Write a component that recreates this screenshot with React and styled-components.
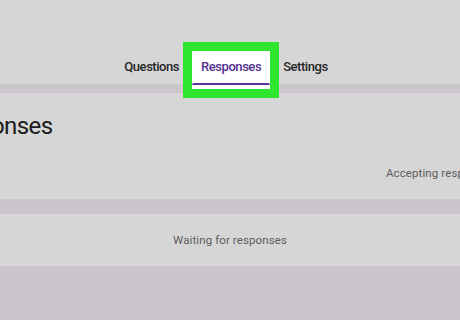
import React from "react";
import styled, { createGlobalStyle } from "styled-components";

const Global = createGlobalStyle`
  html, body { margin: 0; padding: 0; }
  body {
    width: 460px;
    height: 320px;
    overflow: hidden;
    background: #cac6cc;
    font-family: Roboto, "Liberation Sans", Arial, sans-serif;
  }
`;

const Page = styled.div`
  width: 460px;
  height: 320px;
  overflow: hidden;
  display: flex;
  flex-direction: column;
  background: #cac6cc;
`;

const Header = styled.header`
  height: 84px;
  flex: none;
  background: #d6d6d6;
  display: flex;
  justify-content: center;
  align-items: flex-start;
  padding-right: 8px;
  gap: 4px;
  position: relative;
  z-index: 2;
`;

const Tab = styled.div`
  position: relative;
  margin-top: 51px;
  height: 38px;
  box-sizing: border-box;
  padding: 8px 9px 0;
  font-size: 13px;
  line-height: 16px;
  font-weight: 500;
  letter-spacing: -0.45px;
  color: ${(p) => (p.$active ? "#55308f" : "#262626")};
  background: ${(p) => (p.$active ? "#ffffff" : "transparent")};
  box-shadow: ${(p) => (p.$active ? "0 0 0 9px #2ee62e" : "none")};
`;

const Underline = styled.span`
  position: absolute;
  left: 0;
  right: 0;
  top: 32px;
  height: 2px;
  background: #553497;
  border-radius: 2px 2px 0 0;
`;

const Gap = styled.div`
  height: ${(p) => p.$h}px;
  flex: none;
`;

const Card = styled.section`
  flex: none;
  height: ${(p) => p.$h}px;
  background: #d6d6d6;
  box-sizing: border-box;
  overflow: hidden;
`;

const Heading = styled.h1`
  margin: 0;
  padding-top: 19px;
  margin-left: -60px;
  font-size: 24px;
  line-height: 28px;
  font-weight: 400;
  letter-spacing: -0.6px;
  color: #1a1a1a;
  white-space: nowrap;
`;

const StatusRow = styled.div`
  margin-top: 26px;
  padding-left: 386px;
  font-size: 11.5px;
  line-height: 14px;
  color: #5c5c5e;
  white-space: nowrap;
  letter-spacing: 0.1px;
`;

const Empty = styled.div`
  padding-top: 19px;
  text-align: center;
  font-size: 11.5px;
  line-height: 14px;
  color: #5c5c5e;
  letter-spacing: 0.1px;
`;

export default function App() {
  return (
    <>
      <Global />
      <Page>
        <Header>
          <Tab>Questions</Tab>
          <Tab $active>
            Responses
            <Underline />
          </Tab>
          <Tab>Settings</Tab>
        </Header>
        <Gap $h={9} />
        <Card $h={106}>
          <Heading>Responses</Heading>
          <StatusRow>Accepting responses</StatusRow>
        </Card>
        <Gap $h={15} />
        <Card $h={52}>
          <Empty>Waiting for responses</Empty>
        </Card>
      </Page>
    </>
  );
}
